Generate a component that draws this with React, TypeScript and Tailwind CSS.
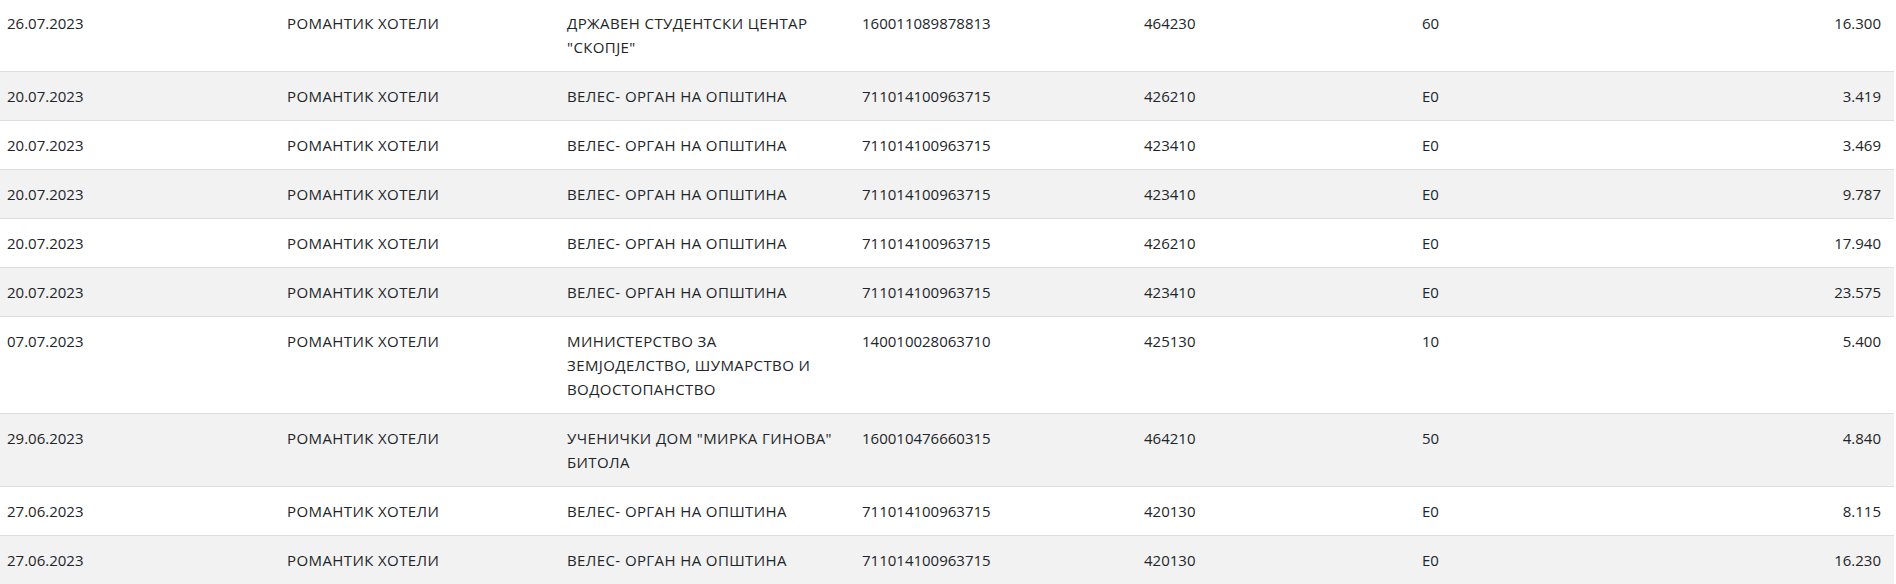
import React from "react";

type Row = {
  date: string;
  inst: string[];
  num: string;
  code: string;
  ofs: string;
  amount: string;
};

const rows: Row[] = [
  { date: "26.07.2023", inst: ["ДРЖАВЕН СТУДЕНТСКИ ЦЕНТАР", "\"СКОПЈЕ\""], num: "160011089878813", code: "464230", ofs: "60", amount: "16.300" },
  { date: "20.07.2023", inst: ["ВЕЛЕС- ОРГАН НА ОПШТИНА"], num: "711014100963715", code: "426210", ofs: "Е0", amount: "3.419" },
  { date: "20.07.2023", inst: ["ВЕЛЕС- ОРГАН НА ОПШТИНА"], num: "711014100963715", code: "423410", ofs: "Е0", amount: "3.469" },
  { date: "20.07.2023", inst: ["ВЕЛЕС- ОРГАН НА ОПШТИНА"], num: "711014100963715", code: "423410", ofs: "Е0", amount: "9.787" },
  { date: "20.07.2023", inst: ["ВЕЛЕС- ОРГАН НА ОПШТИНА"], num: "711014100963715", code: "426210", ofs: "Е0", amount: "17.940" },
  { date: "20.07.2023", inst: ["ВЕЛЕС- ОРГАН НА ОПШТИНА"], num: "711014100963715", code: "423410", ofs: "Е0", amount: "23.575" },
  { date: "07.07.2023", inst: ["МИНИСТЕРСТВО ЗА", "ЗЕМЈОДЕЛСТВО, ШУМАРСТВО И", "ВОДОСТОПАНСТВО"], num: "140010028063710", code: "425130", ofs: "10", amount: "5.400" },
  { date: "29.06.2023", inst: ["УЧЕНИЧКИ ДОМ \"МИРКА ГИНОВА\"", "БИТОЛА"], num: "160010476660315", code: "464210", ofs: "50", amount: "4.840" },
  { date: "27.06.2023", inst: ["ВЕЛЕС- ОРГАН НА ОПШТИНА"], num: "711014100963715", code: "420130", ofs: "Е0", amount: "8.115" },
  { date: "27.06.2023", inst: ["ВЕЛЕС- ОРГАН НА ОПШТИНА"], num: "711014100963715", code: "420130", ofs: "Е0", amount: "16.230" },
];

export default function App() {
  return (
    <div className="w-[1896px] h-[584px] overflow-hidden bg-white">
      <table
        className="w-[1894px] table-fixed border-collapse -mt-[1px] text-[15px] leading-[24px] text-[#212529]"
        style={{ fontFamily: '"Open Sans", "Noto Sans", sans-serif' }}
      >
        <colgroup>
          <col className="w-[280px]" />
          <col className="w-[280px]" />
          <col className="w-[295px]" />
          <col className="w-[282px]" />
          <col className="w-[278px]" />
          <col className="w-[240px]" />
          <col />
        </colgroup>
        <tbody>
          {rows.map((r, i) => (
            <tr
              key={i}
              className={`border-b border-[#dedede] align-top ${i % 2 === 1 ? "bg-[#f2f2f2]" : "bg-white"}`}
            >
              <td className="pl-[7px] pr-2 py-3">{r.date}</td>
              <td className="pl-[7px] pr-2 py-3 tracking-[0.4px]">РОМАНТИК ХОТЕЛИ</td>
              <td className="pl-[7px] pr-2 py-3 tracking-[0.4px]">
                {r.inst.map((l, j) => (
                  <div key={j} className="whitespace-nowrap">{l}</div>
                ))}
              </td>
              <td className="pl-[7px] pr-2 py-3">{r.num}</td>
              <td className="pl-[7px] pr-2 py-3">{r.code}</td>
              <td className="pl-[7px] pr-2 py-3">{r.ofs}</td>
              <td className="pl-2 pr-[13px] py-3 text-right">{r.amount}</td>
            </tr>
          ))}
        </tbody>
      </table>
    </div>
  );
}
